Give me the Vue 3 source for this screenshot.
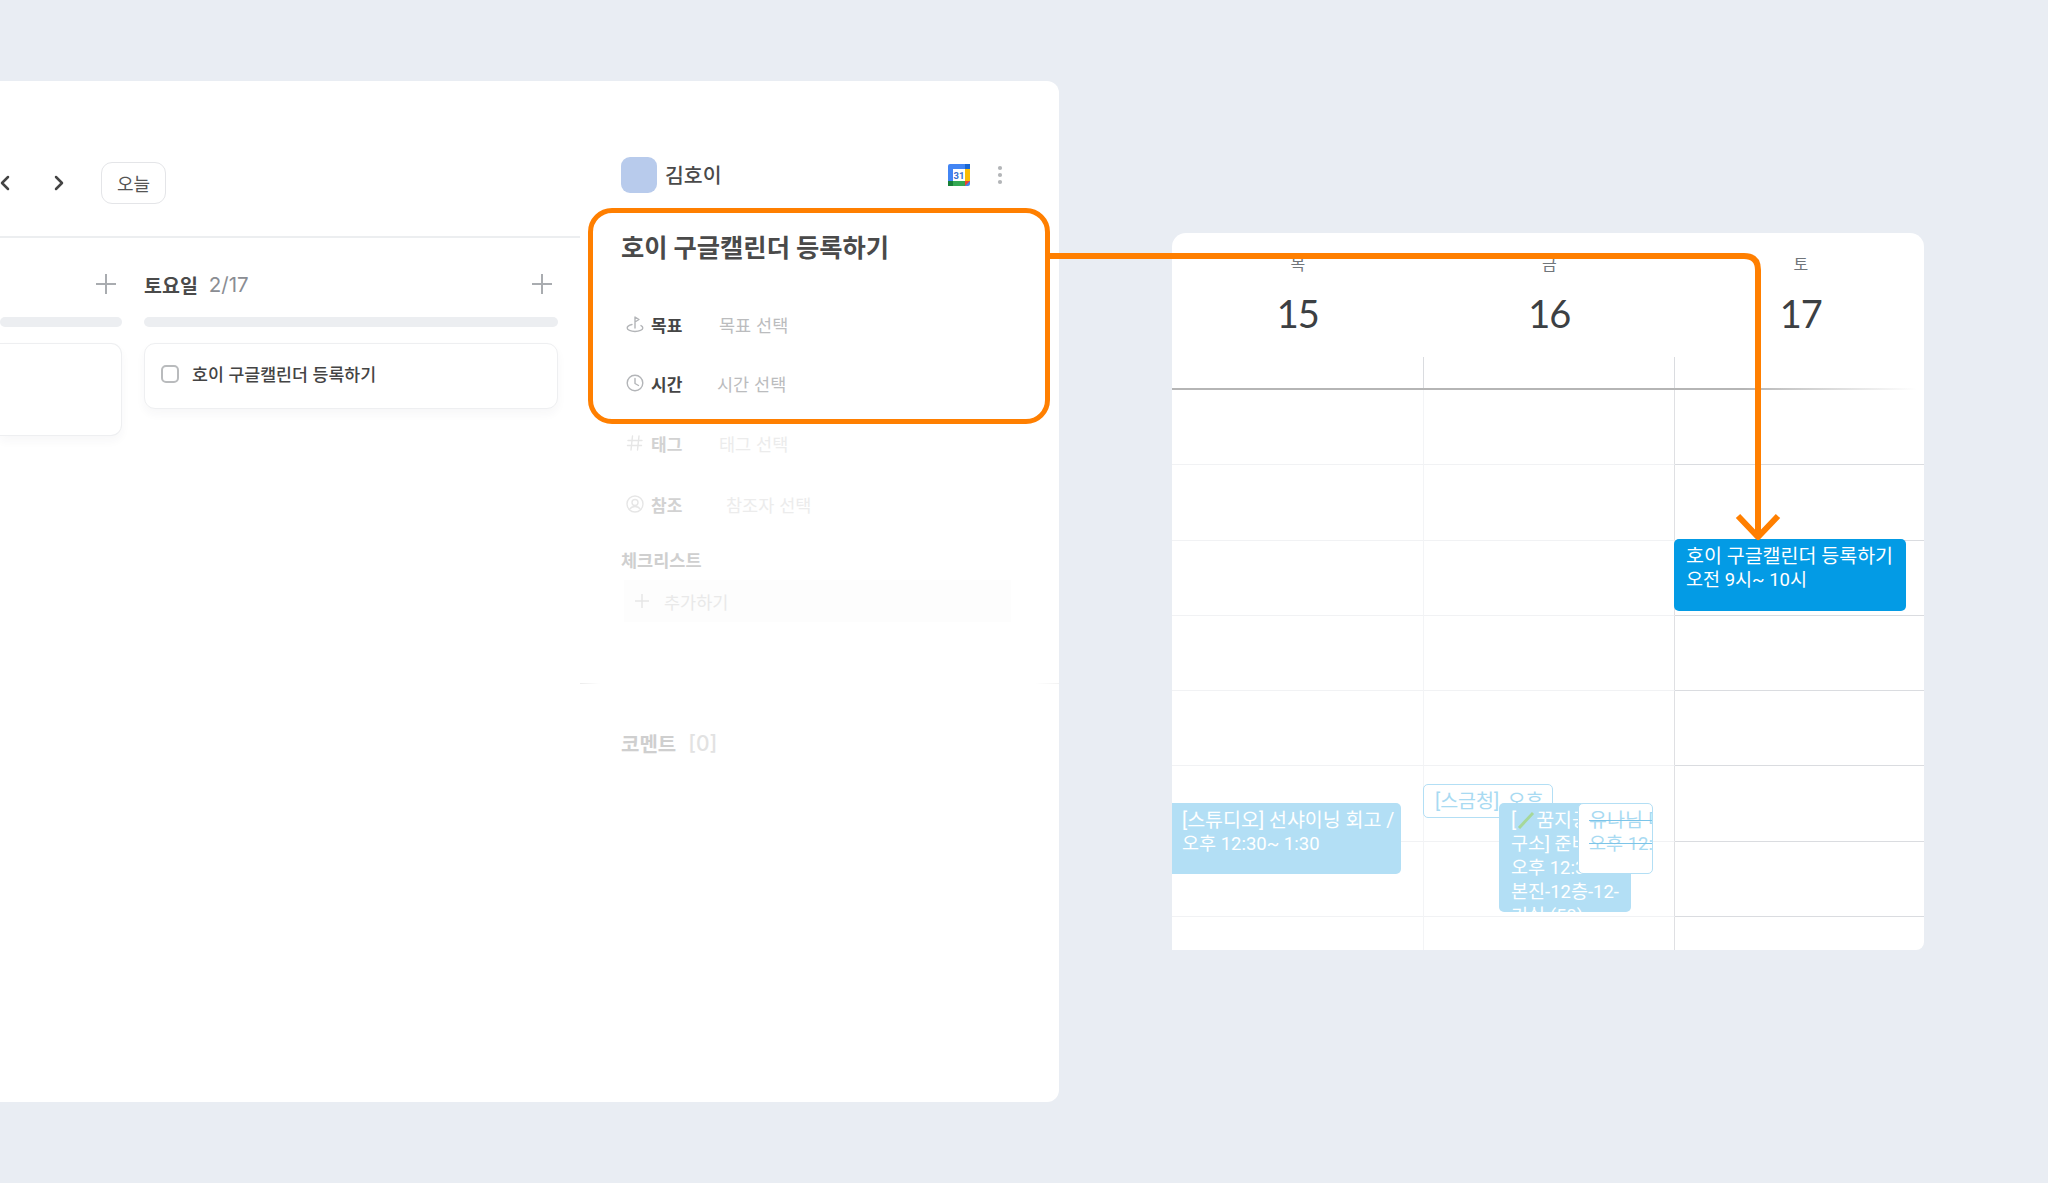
<template>
  <div class="page">
    <section class="panel">
      <div class="board">
        <div class="nav">
          <svg class="chev" viewBox="0 0 14 18"><path d="M10 3 4 9l6 6" /></svg>
          <svg class="chev" viewBox="0 0 14 18"><path d="m4 3 6 6-6 6" /></svg>
          <button class="today">오늘</button>
        </div>
        <div class="board-line"></div>
        <div class="columns">
          <div class="col col-prev">
            <div class="col-head">
              <svg class="plus" viewBox="0 0 22 22"><path d="M11 1v20M1 11h20" /></svg>
            </div>
            <div class="bar"></div>
            <div class="task task-tall"></div>
          </div>
          <div class="col col-sat">
            <div class="col-head">
              <span class="col-day">토요일</span>
              <span class="col-date">2/17</span>
              <svg class="plus" viewBox="0 0 22 22"><path d="M11 1v20M1 11h20" /></svg>
            </div>
            <div class="bar"></div>
            <div class="task">
              <span class="check"></span>
              <span class="task-text">호이 구글캘린더 등록하기</span>
            </div>
          </div>
        </div>
      </div>

      <div class="detail">
        <div class="owner">
          <span class="avatar"></span>
          <span class="owner-name">김호이</span>
          <svg class="gcal" viewBox="0 0 22 22">
            <rect x="0" y="0" width="22" height="22" rx="2" fill="#4285f4" />
            <rect x="17" y="0" width="5" height="5" fill="#1967d2" />
            <rect x="17" y="5" width="5" height="12" fill="#fbbc04" />
            <rect x="0" y="17" width="17" height="5" fill="#34a853" />
            <rect x="0" y="17" width="5" height="5" fill="#188038" />
            <path d="M17 17h5l-5 5z" fill="#ea4335" />
            <rect x="5" y="5" width="12" height="12" fill="#fff" />
            <text x="11" y="14.5" text-anchor="middle" class="gcal-num">31</text>
          </svg>
          <svg class="dots" viewBox="0 0 6 20">
            <circle cx="3" cy="3" r="2.1" />
            <circle cx="3" cy="10" r="2.1" />
            <circle cx="3" cy="17" r="2.1" />
          </svg>
        </div>

        <div class="focus">
          <h1 class="title">호이 구글캘린더 등록하기</h1>
          <div class="field field-goal">
            <svg class="field-icon" viewBox="0 0 18 18">
              <path d="M9 13V2l4 2.5L9 7" />
              <path d="M6 9.5C3 10.2 1.2 11.4 1.2 13c0 1.900 3.500 3.500 7.800 3.500s7.800-1.600 7.800-3.500c0-1-.7-1.800-1.800-2.400" />
            </svg>
            <span class="field-label">목표</span>
            <span class="field-value">목표 선택</span>
          </div>
          <div class="field field-time">
            <svg class="field-icon" viewBox="0 0 18 18">
              <circle cx="9" cy="9" r="7.8" />
              <path d="M9 4.5V9.5l3.500 2" />
            </svg>
            <span class="field-label">시간</span>
            <span class="field-value">시간 선택</span>
          </div>
        </div>

        <div class="faded">
          <div class="field field-tag">
            <svg class="field-icon" viewBox="0 0 18 18">
              <path d="M6.500 2 5 16M13 2l-1.500 14M2 6.500h14M1.500 11.500h14" />
            </svg>
            <span class="field-label">태그</span>
            <span class="field-value">태그 선택</span>
          </div>
          <div class="field field-ref">
            <svg class="field-icon" viewBox="0 0 18 18">
              <circle cx="9" cy="9" r="8" />
              <circle cx="9" cy="7.500" r="3" />
              <path d="M3.500 14.500c1.200-2 3.200-3 5.500-3s4.300 1 5.500 3" />
            </svg>
            <span class="field-label">참조</span>
            <span class="field-value">참조자 선택</span>
          </div>
          <div class="check-title">체크리스트</div>
          <div class="add-row">
            <svg class="add-plus" viewBox="0 0 14 14"><path d="M7 0v14M0 7h14" /></svg>
            <span>추가하기</span>
          </div>
        </div>

        <div class="detail-line"></div>

        <div class="comment">
          <span class="comment-title">코멘트</span>
          <span class="comment-count">[0]</span>
        </div>
      </div>
    </section>

    <section class="calendar">
      <div class="cal-head">
        <div v-for="d in days" :key="d.num" class="cal-day">
          <span class="cal-week">{{ d.week }}</span>
          <span class="cal-num">{{ d.num }}</span>
        </div>
      </div>
      <div class="cal-allday">
        <span></span><span></span><span></span>
      </div>
      <div class="cal-rule"></div>
      <div class="cal-grid">
        <div v-for="n in 8" :key="n" class="cal-row">
          <span></span><span></span><span></span>
        </div>

        <div class="ev ev-main">
          <span>호이 구글캘린더 등록하기</span>
          <span>오전 9시~ 10시</span>
        </div>
        <div class="ev ev-soft ev-studio">
          <span>[스튜디오] 선샤이닝 회고 /</span>
          <span>오후 12:30~ 1:30</span>
        </div>
        <div class="ev ev-line ev-check">
          <span>[스금청], 오후</span>
        </div>
        <div class="ev ev-soft ev-room">
          <span>[<svg class="pencil" viewBox="0 0 20 18"><path d="M3 17 17 2" /></svg>꿈지공간</span>
          <span>구소] 준비</span>
          <span>오후 12:30</span>
          <span>본진-12층-12-</span>
          <span>기실 (50)</span>
        </div>
        <div class="ev ev-line ev-done">
          <span>유나님 미팅</span>
          <span>오후 12:30</span>
        </div>
      </div>
    </section>

    <svg class="arrow" viewBox="0 0 2048 1183">
      <path d="M1050 256H1744Q1758 256 1758 270V534" />
      <path d="M1738 516 1758 537 1778 516" />
    </svg>
  </div>
</template>

<script setup>
const days = [
  { week: '목', num: 15 },
  { week: '금', num: 16 },
  { week: '토', num: 17 }
]
</script>

<style>
html,
body {
  margin: 0;
  background: #e9edf3;
}
</style>

<style scoped>
.page {
  position: relative;
  display: flex;
  align-items: flex-start;
  gap: 113px;
  width: 2048px;
  height: 1183px;
  padding-top: 81px;
  box-sizing: border-box;
  overflow: hidden;
  background: #e9edf3;
  font-family: Inter, "Noto Sans CJK KR", sans-serif;
  color: #444;
}

.panel {
  display: flex;
  flex: none;
  width: 1059px;
  height: 1021px;
  background: #fff;
  border-radius: 0 12px 12px 0;
}

/* board on the left */
.board {
  flex: none;
  width: 580px;
  padding-top: 81px;
  box-sizing: border-box;
}

.nav {
  display: flex;
  align-items: center;
  gap: 40px;
  height: 42px;
  margin-left: -2px;
}

.chev {
  width: 14px;
  height: 18px;
  fill: none;
  stroke: #444;
  stroke-width: 2.5;
  stroke-linecap: round;
  stroke-linejoin: round;
}

.today {
  width: 65px;
  height: 42px;
  margin-left: -5px;
  padding: 0;
  border: 1px solid #e4e5e8;
  border-radius: 11px;
  background: #fff;
  font: 400 18px "Noto Sans CJK KR", sans-serif;
  color: #555;
}

.board-line {
  height: 2px;
  margin-top: 32px;
  background: #eceef0;
}

.columns {
  display: flex;
  gap: 22px;
  margin-top: 33px;
}

.col-prev {
  flex: none;
  width: 122px;
}

.col-sat {
  flex: none;
  width: 414px;
}

.col-head {
  display: flex;
  align-items: center;
  height: 26px;
  padding-right: 5px;
}

.col-day {
  font-size: 19.5px;
  font-weight: 700;
  color: #4a4a4a;
}

.col-date {
  margin-left: 11px;
  font-size: 20.5px;
  color: #8a8d93;
}

.plus {
  width: 22px;
  height: 22px;
  margin-left: auto;
  fill: none;
  stroke: #a9acb0;
  stroke-width: 2;
}

.bar {
  height: 10px;
  margin-top: 20px;
  border-radius: 5px;
  background: #eceef1;
}

.task {
  display: flex;
  align-items: flex-start;
  gap: 13px;
  height: 66px;
  margin-top: 16px;
  padding: 21px 16px 0;
  box-sizing: border-box;
  background: #fff;
  border: 1px solid #eeeff1;
  border-radius: 11px;
  box-shadow: 0 5px 10px rgba(40, 50, 70, 0.04);
}

.task-tall {
  height: 93px;
  border-left: 0;
  border-radius: 0 11px 11px 0;
}

.check {
  flex: none;
  width: 18px;
  height: 18px;
  box-sizing: border-box;
  border: 2px solid #b9bbbd;
  border-radius: 5px;
}

.task-text {
  font-size: 17.3px;
  line-height: 20px;
  font-weight: 500;
  color: #444;
}

/* detail on the right */
.detail {
  flex: 1;
  min-width: 0;
  padding-top: 76px;
}

.owner {
  display: flex;
  align-items: center;
  height: 36px;
  margin-left: 41px;
}

.avatar {
  width: 36px;
  height: 36px;
  border-radius: 9px;
  background: #b8cbec;
}

.owner-name {
  margin: -2px 0 0 8px;
  font-size: 20.5px;
  font-weight: 500;
  color: #4a4a4a;
}

.gcal {
  width: 22px;
  height: 22px;
  margin-left: auto;
}

.gcal-num {
  font: 700 9.5px Roboto, sans-serif;
  fill: #3a6fd0;
}

.dots {
  width: 6px;
  height: 20px;
  margin: 0 56px 0 27px;
  fill: #b3b5b8;
}

.focus {
  width: 462px;
  height: 216px;
  margin: 15px 0 0 8px;
  padding: 0 0 0 28px;
  box-sizing: border-box;
  border: 5.5px solid #ff7f00;
  border-radius: 24px;
}

.title {
  margin: 18px 0 44px;
  font-size: 25.3px;
  line-height: 34px;
  font-weight: 700;
  color: #4a4a4a;
}

.field {
  display: flex;
  align-items: center;
  height: 30px;
}

.field-time {
  margin-top: 29px;
}

.field-icon {
  flex: none;
  width: 18px;
  height: 18px;
  margin-left: 5px;
  fill: none;
  stroke: #b3b5b8;
  stroke-width: 1.4;
  stroke-linecap: round;
  stroke-linejoin: round;
}

.field-label {
  flex: none;
  width: 68px;
  margin-left: 7px;
  font-size: 17px;
  font-weight: 700;
  color: #454545;
}

.field-value {
  font-size: 17.5px;
  color: #bbbcbe;
}

.field-time .field-value {
  margin-left: -2px;
}

.faded {
  margin: 4px 0 0 41px;
}

.faded .field-icon {
  stroke: #e6e6e6;
}

.faded .field-label {
  color: #d2d2d2;
}

.faded .field-value {
  color: #ececec;
}

.field-ref {
  margin-top: 31px;
}

.field-ref .field-value {
  margin-left: 7px;
}

.check-title {
  margin-top: 30px;
  font-size: 17.5px;
  line-height: 24px;
  font-weight: 700;
  color: #cfcfcf;
}

.add-row {
  display: flex;
  align-items: center;
  width: 387px;
  height: 42px;
  margin: 7px 0 0 3px;
  padding-left: 11px;
  box-sizing: border-box;
  background: #fdfdfd;
  font-size: 17.5px;
  color: #e9e9e9;
}

.add-plus {
  width: 14px;
  height: 14px;
  margin-right: 15px;
  fill: none;
  stroke: #e6e6e6;
  stroke-width: 1.5;
}

.detail-line {
  height: 1px;
  margin-top: 61px;
  background: linear-gradient(90deg, #ececec 0, #fff 20px, #fff 455px, #f2f2f2 479px);
}

.comment {
  display: flex;
  align-items: center;
  gap: 12px;
  height: 30px;
  margin: 44px 0 0 41px;
  font-size: 20px;
  font-weight: 700;
  color: #cfcfcf;
}

.comment-count {
  font-size: 21px;
  font-weight: 500;
  color: #e2e2e2;
}

/* calendar */
.calendar {
  flex: none;
  width: 752px;
  height: 717px;
  margin-top: 152px;
  overflow: hidden;
  background: #fff;
  border-radius: 14px 14px 8px 0;
  font-family: Roboto, "Noto Sans CJK KR", sans-serif;
}

.cal-head,
.cal-allday,
.cal-row {
  display: grid;
  grid-template-columns: repeat(3, 251.5px);
}

.cal-head {
  height: 124px;
}

.cal-day {
  display: flex;
  flex-direction: column;
  align-items: center;
  padding-top: 22px;
}

.cal-week {
  font-size: 16px;
  line-height: 20px;
  color: #70757a;
}

.cal-num {
  margin-top: 16px;
  font-family: Lato, sans-serif;
  font-size: 38px;
  line-height: 44px;
  letter-spacing: -1px;
  color: #3c4043;
}

.cal-allday {
  height: 31px;
}

.cal-allday span {
  border-right: 1px solid #dadce0;
}

.cal-rule {
  height: 2px;
  background: linear-gradient(90deg, #b5b5b5 0, #b5b5b5 76%, #fff 99%);
}

.cal-grid {
  position: relative;
}

.cal-row {
  height: 75.3px;
}

.cal-row span {
  box-sizing: border-box;
  border-right: 1px solid #f3f4f6;
  border-bottom: 1px solid #f1f2f4;
}

.cal-row span:nth-child(2) {
  border-right-color: #dfe0e3;
}

.cal-row span:nth-child(3) {
  border-bottom-color: #dadce0;
}

.ev {
  position: absolute;
  box-sizing: border-box;
  overflow: hidden;
  border-radius: 5px;
  font-size: 18.5px;
  line-height: 24px;
  white-space: nowrap;
}

.ev span {
  display: block;
}

.ev span:first-child {
  margin: 1px 0 -1px;
  font-size: 19.5px;
}

.ev-main {
  top: 149px;
  left: 502px;
  width: 232px;
  height: 72px;
  padding: 5px 0 0 12px;
  background: #039be5;
  color: #fff;
}

.ev-soft {
  background: #b3dff5;
  color: #fff;
}

.ev-line {
  background: #fff;
  border: 1.5px solid #b3dff5;
  color: #a8daf2;
}

.ev-studio {
  top: 413px;
  left: 0;
  width: 229px;
  height: 71px;
  padding: 5px 0 0 10px;
  border-radius: 0 5px 5px 0;
}

.ev-check {
  top: 394px;
  left: 251px;
  width: 130px;
  height: 34px;
  padding: 4px 0 0 11px;
}

.ev-room {
  top: 413px;
  left: 327px;
  width: 132px;
  height: 109px;
  padding: 5px 0 0 12px;
}

.pencil {
  width: 20px;
  height: 18px;
  vertical-align: -2px;
  fill: none;
  stroke: #a6d89a;
  stroke-width: 3;
}

.ev-done {
  top: 413px;
  left: 406px;
  width: 75px;
  height: 71px;
  padding: 4px 0 0 10px;
  text-decoration: line-through;
  text-decoration-color: #7cc4e8;
}

/* orange connector over both cards */
.arrow {
  position: absolute;
  top: 0;
  left: 0;
  width: 2048px;
  height: 1183px;
  pointer-events: none;
  fill: none;
  stroke: #ff7f00;
  stroke-width: 6;
  stroke-linejoin: round;
}
</style>
